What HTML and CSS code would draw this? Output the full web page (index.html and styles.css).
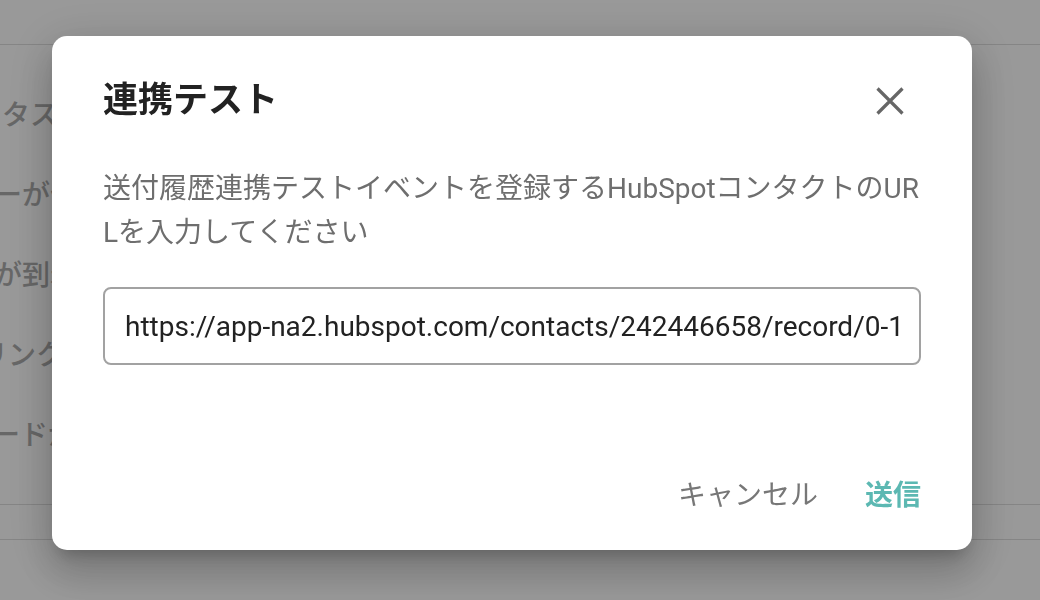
FILE: index.html
```html
<!DOCTYPE html>
<html lang="ja">
<head>
<meta charset="utf-8">
<title>連携テスト</title>
<link rel="stylesheet" href="styles.css">
</head>
<body>
<div class="page">
  <div class="page-rule"></div>
  <ul class="events">
    <li class="event"><span class="event-label">タスクが完了した</span></li>
    <li class="event"><span class="event-label shift-a">ーが作成された</span></li>
    <li class="event"><span class="event-label shift-a">が到着した</span></li>
    <li class="event"><span class="event-label shift-b">リンクがクリックされた</span></li>
    <li class="event"><span class="event-label shift-c">ードが送信された</span></li>
  </ul>
  <div class="page-rule rule-low"></div>
  <div class="page-rule rule-lower"></div>
</div>

<div class="overlay">
  <div class="dialog" role="dialog" aria-labelledby="dlg-title">
    <div class="dialog-header">
      <h2 class="dialog-title" id="dlg-title">連携テスト</h2>
      <button class="close-btn" type="button" aria-label="閉じる">
        <svg width="28" height="28" viewBox="0 0 28 28"><path d="M1.5 1.5 26.5 26.5M26.5 1.5 1.5 26.5" stroke="#666" stroke-width="3.2" fill="none"/></svg>
      </button>
    </div>
    <p class="dialog-text">送付履歴連携テストイベントを登録するHubSpotコンタクトのURLを入力してください</p>
    <input class="url-input" type="text" value="https://app-na2.hubspot.com/contacts/242446658/record/0-1">
    <div class="dialog-actions">
      <button class="btn btn-cancel" type="button">キャンセル</button>
      <button class="btn btn-submit" type="button">送信</button>
    </div>
  </div>
</div>
</body>
</html>
```

FILE: styles.css
```css
html, body {
  margin: 0;
  padding: 0;
}

body {
  width: 1040px;
  height: 600px;
  overflow: hidden;
  background: #ffffff;
  font-family: "Roboto", "Noto Sans CJK JP", sans-serif;
}

.page {
  padding-top: 44px;
  overflow: hidden;
}

.page-rule {
  height: 1px;
  background: #dedede;
}

.rule-low {
  margin-top: 31px;
}

.rule-lower {
  margin-top: 34px;
}

.events {
  list-style: none;
  margin: 0;
  padding: 28px 0 0 0;
}

.event {
  height: 80px;
  display: flex;
  align-items: center;
  white-space: nowrap;
  overflow: hidden;
}

.event-label {
  font-size: 28px;
  font-weight: 500;
  color: #acacac;
  margin-left: 2px;
}

.event-label.shift-a {
  margin-left: -6px;
}

.event-label.shift-b {
  margin-left: -20px;
}

.event-label.shift-c {
  margin-left: -8px;
}

.overlay {
  position: fixed;
  inset: 0;
  background: rgba(0, 0, 0, 0.4);
}

.dialog {
  position: absolute;
  left: 52px;
  top: 36px;
  width: 920px;
  height: 514px;
  box-sizing: border-box;
  padding: 41px 51px 32px 51px;
  background: #ffffff;
  border-radius: 15px;
  display: flex;
  flex-direction: column;
  box-shadow:
    0 11px 15px -7px rgba(0, 0, 0, 0.2),
    0 24px 38px 3px rgba(0, 0, 0, 0.14),
    0 9px 46px 8px rgba(0, 0, 0, 0.12);
}

.dialog-header {
  display: flex;
  align-items: center;
  justify-content: space-between;
}

.dialog-title {
  margin: 0;
  font-size: 35px;
  line-height: 48px;
  font-weight: 700;
  color: #222222;
}

.close-btn {
  border: 0;
  background: none;
  padding: 0;
  margin-right: 17px;
  width: 28px;
  height: 28px;
  display: flex;
  cursor: pointer;
}

.dialog-text {
  margin: 42px 0 0 0;
  font-size: 28px;
  line-height: 44px;
  color: #6e6e6e;
  word-break: break-all;
}

.url-input {
  margin-top: 32px;
  height: 78px;
  box-sizing: border-box;
  width: 100%;
  border: 2px solid #a2a2a2;
  border-radius: 8px;
  padding: 0 20px;
  font-family: "Roboto", "Noto Sans CJK JP", sans-serif;
  font-size: 28px;
  color: #222222;
  background: #ffffff;
  outline: none;
}

.dialog-actions {
  margin-top: auto;
  display: flex;
  justify-content: flex-end;
  align-items: center;
  gap: 47px;
}

.btn {
  border: 0;
  background: none;
  padding: 0;
  font-family: "Roboto", "Noto Sans CJK JP", sans-serif;
  font-size: 28px;
  line-height: 44px;
  cursor: pointer;
}

.btn-cancel {
  color: #777777;
  font-weight: 400;
}

.btn-submit {
  color: #5cb8b2;
  font-weight: 700;
}
```
